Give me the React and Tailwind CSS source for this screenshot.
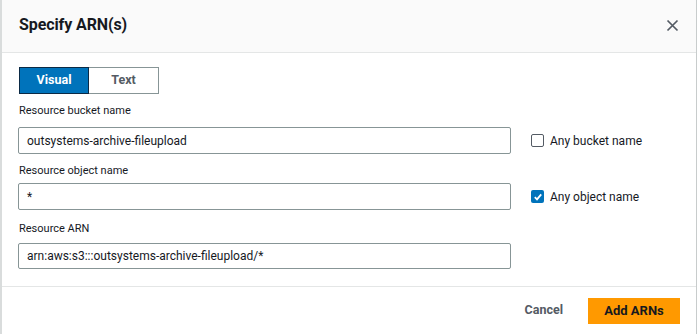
import { useState } from "react";

export default function App() {
  const [tab, setTab] = useState("visual");
  const [anyBucket, setAnyBucket] = useState(false);
  const [anyObject, setAnyObject] = useState(true);

  const font = { fontFamily: "Roboto, 'Noto Sans', sans-serif" };

  return (
    <div className="w-[700px] h-[334px] bg-white overflow-hidden" style={font}>
      <div className="w-[697px] h-full border-l-2 border-r border-l-[#d9dcdc] border-r-[#c8cccc] flex flex-col text-[#16191f]">
        {/* header */}
        <div className="h-[53px] shrink-0 bg-[#fafafa] border-b border-[#e4e6e6] flex items-center justify-between pl-[17px] pr-[16px]">
          <h1 className="text-[16px] font-bold tracking-[-0.1px] -mt-[2px]">Specify ARN(s)</h1>
          <button className="w-4 h-4 flex items-center justify-center text-[#545b64] -mt-[2px]">
            <svg width="13" height="13" viewBox="0 0 13 13" fill="none" stroke="currentColor" strokeWidth="1.7">
              <path d="M1.5 1.5 L11.5 11.5 M11.5 1.5 L1.5 11.5" />
            </svg>
          </button>
        </div>

        {/* body */}
        <div className="flex-1 pl-[16px] pt-[14px]">
          <div className="flex w-[140px] h-[27px] mb-[9px] ml-[1px]">
            <button
              onClick={() => setTab("visual")}
              className={
                tab === "visual"
                  ? "w-[70px] h-full bg-[#0073bb] border border-[#0b2a45] text-white text-[12.5px] font-bold"
                  : "w-[70px] h-full bg-white border border-[#879596] text-[#545b64] text-[12.5px] font-bold"
              }
            >
              Visual
            </button>
            <button
              onClick={() => setTab("text")}
              className={
                tab === "text"
                  ? "w-[70px] h-full bg-[#0073bb] border border-[#0b2a45] text-white text-[12.5px] font-bold"
                  : "w-[70px] h-full bg-white border border-l-0 border-[#879596] text-[#545b64] text-[12.5px] font-bold"
              }
            >
              Text
            </button>
          </div>

          <div className="text-[11px] leading-[16px] ml-[1px]">Resource bucket name</div>
          <div className="flex items-center mt-[8px]">
            <div className="w-[493px] h-[27px] border border-[#879596] rounded-[2px] flex items-center pl-[8px] text-[12px]">
              outsystems-archive-fileupload
            </div>
            <label className="flex items-center ml-[20px] text-[12px] cursor-pointer" onClick={() => setAnyBucket(!anyBucket)}>
              <span className={anyBucket ? "w-[13px] h-[13px] rounded-[2px] bg-[#0073bb] flex items-center justify-center" : "w-[13px] h-[13px] rounded-[2px] border border-[#545b64] bg-white"}>
                {anyBucket && (
                  <svg width="10" height="10" viewBox="0 0 10 10" fill="none" stroke="white" strokeWidth="1.8">
                    <path d="M1.8 5.2 L4 7.4 L8.2 2.4" />
                  </svg>
                )}
              </span>
              <span className="ml-[6px]">Any bucket name</span>
            </label>
          </div>

          <div className="text-[11px] leading-[16px] ml-[1px] mt-[9px]">Resource object name</div>
          <div className="flex items-center mt-[4px]">
            <div className="w-[493px] h-[27px] border border-[#879596] rounded-[2px] flex items-center pl-[8px] text-[12px]">
              *
            </div>
            <label className="flex items-center ml-[20px] text-[12px] cursor-pointer" onClick={() => setAnyObject(!anyObject)}>
              <span className={anyObject ? "w-[13px] h-[13px] rounded-[2px] bg-[#0073bb] flex items-center justify-center" : "w-[13px] h-[13px] rounded-[2px] border border-[#545b64] bg-white"}>
                {anyObject && (
                  <svg width="10" height="10" viewBox="0 0 10 10" fill="none" stroke="white" strokeWidth="1.8">
                    <path d="M1.8 5.2 L4 7.4 L8.2 2.4" />
                  </svg>
                )}
              </span>
              <span className="ml-[6px]">Any object name</span>
            </label>
          </div>

          <div className="text-[11px] leading-[16px] ml-[1px] mt-[11px]">Resource ARN</div>
          <div className="w-[493px] h-[26px] mt-[6px] border border-[#879596] rounded-[2px] flex items-center pl-[8px] text-[12px]">
            arn:aws:s3:::outsystems-archive-fileupload/*
          </div>
        </div>

        {/* footer */}
        <div className="h-[48px] shrink-0 border-t border-[#e4e6e6] flex items-center justify-end pr-[16px]">
          <button className="text-[12.5px] font-bold text-[#545b64] mr-[25px]">Cancel</button>
          <button className="w-[92px] h-[26px] bg-[#ff9900] text-[13px] font-bold text-[#16191f]">
            Add ARNs
          </button>
        </div>
      </div>
    </div>
  );
}
